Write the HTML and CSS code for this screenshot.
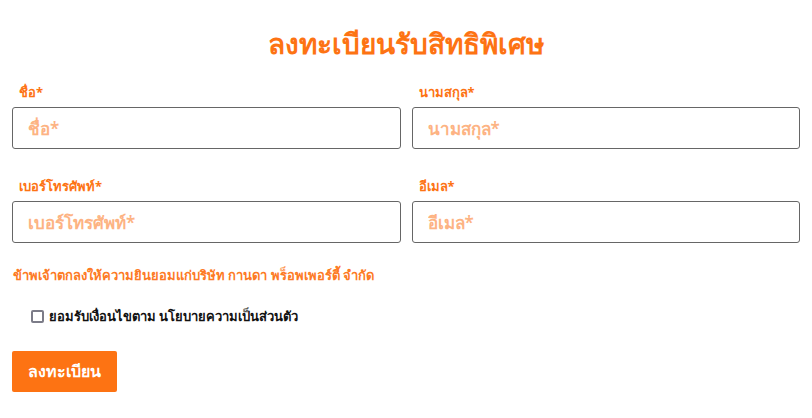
FILE: index.html
```html
<!DOCTYPE html>
<html lang="th">

<head>
  <meta charset="UTF-8">
  <meta name="viewport" content="width=device-width, initial-scale=1.0">
  <title>ลงทะเบียนรับสิทธิพิเศษ</title>
  <link rel="stylesheet" href="styles.css">
</head>

<body>
  <form class="register">
    <h1 class="title">ลงทะเบียนรับสิทธิพิเศษ</h1>

    <div class="fields">
      <div class="field">
        <label for="firstName">ชื่อ*</label>
        <input type="text" id="firstName" placeholder="ชื่อ*">
      </div>
      <div class="field">
        <label for="lastName">นามสกุล*</label>
        <input type="text" id="lastName" placeholder="นามสกุล*">
      </div>
      <div class="field">
        <label for="phone">เบอร์โทรศัพท์*</label>
        <input type="tel" id="phone" placeholder="เบอร์โทรศัพท์*">
      </div>
      <div class="field">
        <label for="email">อีเมล*</label>
        <input type="email" id="email" placeholder="อีเมล*">
      </div>
    </div>

    <p class="consent">ข้าพเจ้าตกลงให้ความยินยอมแก่บริษัท กานดา พร็อพเพอร์ตี้ จำกัด</p>

    <label class="accept">
      <input type="checkbox">
      <span>ยอมรับเงื่อนไขตาม นโยบายความเป็นส่วนตัว</span>
    </label>

    <button type="submit" class="submit">ลงทะเบียน</button>
  </form>
</body>

</html>
```

FILE: styles.css
```css
body {
  margin: 0;
  padding: 0 12px;
  font-family: 'Noto Sans', 'DejaVu Sans', sans-serif;
  background: #ffffff;
  color: #111;
}

.title {
  margin: 22px 0 16px;
  text-align: center;
  font-size: 28px;
  font-weight: 700;
  color: #fd7313;
}

.fields {
  display: grid;
  grid-template-columns: 1fr 1fr;
  column-gap: 11px;
  row-gap: 27px;
}

.field label {
  display: block;
  padding-left: 7px;
  margin-bottom: 4px;
  font-size: 13px;
  font-weight: 700;
  color: #fd7313;
}

.field input {
  display: block;
  box-sizing: border-box;
  width: 100%;
  height: 42px;
  padding: 0 15px;
  border: 1px solid #666;
  border-radius: 3px;
  font-family: inherit;
  font-size: 17px;
  font-weight: 600;
}

.field input::placeholder {
  color: #fdb383;
}

.consent {
  margin: 22px 0 0;
  padding-left: 1px;
  font-size: 13px;
  font-weight: 700;
  color: #fd7a24;
}

.accept {
  display: flex;
  align-items: center;
  gap: 5px;
  margin: 20px 0 0 19px;
  font-size: 13px;
  font-weight: 700;
  color: #111;
}

.accept input {
  appearance: none;
  box-sizing: border-box;
  margin: 0;
  width: 13px;
  height: 13px;
  border: 2px solid #7c7c88;
  border-radius: 2px;
  background: #fff;
}

.submit {
  display: block;
  margin-top: 24px;
  width: 105px;
  height: 41px;
  border: none;
  border-radius: 2px;
  background: #fd7313;
  color: #fff;
  font-family: inherit;
  font-size: 16px;
  font-weight: 700;
}
```
